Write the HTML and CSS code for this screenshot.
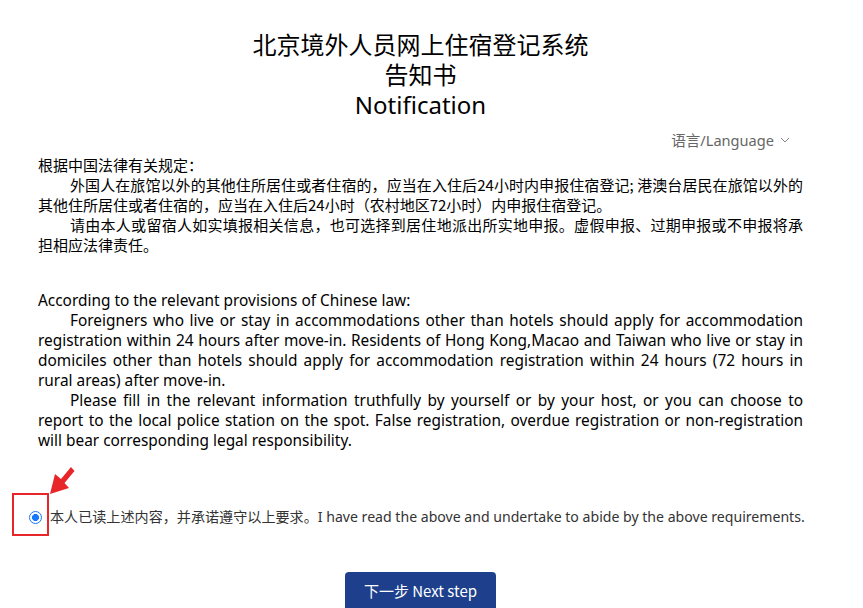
FILE: index.html
```html
<!DOCTYPE html>
<html lang="zh-CN">
<head>
<meta charset="utf-8">
<title>北京境外人员网上住宿登记系统</title>
<link rel="stylesheet" href="styles.css">
</head>
<body>
<div class="page">
  <header class="title">
    <div>北京境外人员网上住宿登记系统</div>
    <div>告知书</div>
    <div>Notification</div>
  </header>
  <div class="lang-row">
    <span class="lang">语言/Language
      <svg class="chev" width="10" height="6" viewBox="0 0 10 6"><path d="M1 1 L5 5 L9 1" fill="none" stroke="#888" stroke-width="1"/></svg>
    </span>
  </div>
  <section class="notice">
    <p class="zh">根据中国法律有关规定：</p>
    <p class="zh ind">外国人在旅馆以外的其他住所居住或者住宿的，应当在入住后24小时内申报住宿登记; 港澳台居民在旅馆以外的其他住所居住或者住宿的，应当在入住后24小时（农村地区72小时）内申报住宿登记。</p>
    <p class="zh ind">请由本人或留宿人如实填报相关信息，也可选择到居住地派出所实地申报。虚假申报、过期申报或不申报将承担相应法律责任。</p>
  </section>
  <section class="notice en-block">
    <p class="en">According to the relevant provisions of Chinese law:</p>
    <p class="en ind">Foreigners who live or stay in accommodations other than hotels should apply for accommodation registration within 24 hours after move-in. Residents of Hong Kong,Macao and Taiwan who live or stay in domiciles other than hotels should apply for accommodation registration within 24 hours (72 hours in rural areas) after move-in.</p>
    <p class="en ind">Please fill in the relevant information truthfully by yourself or by your host, or you can choose to report to the local police station on the spot. False registration, overdue registration or non-registration will bear corresponding legal responsibility.</p>
  </section>
  <div class="agree">
    <span class="radio"></span>
    <span class="agree-text">本人已读上述内容，并承诺遵守以上要求。I have read the above and undertake to abide by the above requirements.</span>
    <span class="mark-box"></span>
    <svg class="arrow" width="32" height="34" viewBox="0 0 32 34"><polygon points="5,32 10,12 16,17 26,5 29.5,9 19.5,21 24,26" fill="#e8262a"/></svg>
  </div>
  <div class="actions">
    <button class="next">下一步 Next step</button>
  </div>
</div>
</body>
</html>
```
FILE: styles.css
```css
html, body {
  margin: 0;
  padding: 0;
  background: #fff;
}
body {
  font-family: "Noto Sans", "Noto Sans CJK SC", sans-serif;
  color: #000;
}
.page {
  width: 765px;
  margin-left: 38px;
  padding-top: 30px;
}
.title {
  text-align: center;
  font-size: 24px;
  line-height: 30px;
}
.lang-row {
  display: flex;
  justify-content: flex-end;
  margin-top: 10px;
  padding-right: 13px;
  height: 20px;
}
.lang {
  font-size: 14.6px;
  line-height: 20px;
  color: #666;
  display: flex;
  align-items: center;
  gap: 6px;
}
.notice {
  margin-top: 5px;
}
.notice p {
  margin: 0;
  text-align: justify;
}
.zh {
  font-size: 15px;
  line-height: 20px;
  font-family: "Noto Sans CJK SC", sans-serif;
}
.en {
  font-size: 15.4px;
  line-height: 20px;
}
.ind {
  text-indent: 32px;
}
.en-block {
  margin-top: 36px;
}
.agree {
  position: relative;
  display: flex;
  align-items: center;
  margin-top: 56px;
  margin-left: -38px;
  padding-left: 29px;
  height: 20px;
}
.radio {
  flex: none;
  width: 13px;
  height: 13px;
  box-sizing: border-box;
  border: 1.5px solid #1677ff;
  border-radius: 50%;
  background: radial-gradient(circle, #1677ff 0 3.2px, #fff 3.8px);
  margin-right: 8px;
}
.agree-text {
  font-size: 14.1px;
  line-height: 20px;
  color: #333;
  white-space: nowrap;
}
.mark-box {
  position: absolute;
  left: 12px;
  top: -14px;
  width: 33px;
  height: 39px;
  border: 2px solid #e8262a;
}
.arrow {
  position: absolute;
  left: 45px;
  top: -45px;
}
.actions {
  display: flex;
  justify-content: center;
  margin-top: 45px;
}
.next {
  width: 151px;
  height: 40px;
  background: #1d3f8c;
  color: #fff;
  border: none;
  border-radius: 4px;
  font-size: 15px;
  font-family: "Noto Sans CJK SC", sans-serif;
  padding: 0 0 4px;
}
```
